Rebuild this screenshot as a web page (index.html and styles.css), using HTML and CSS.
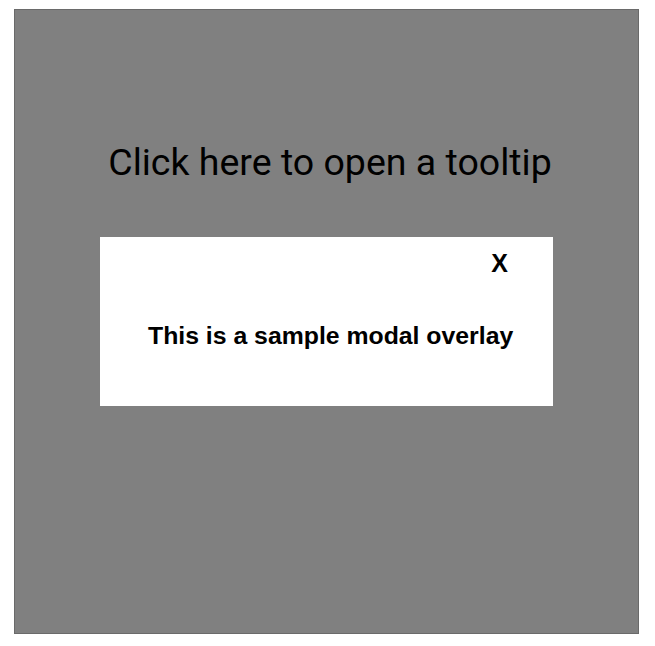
FILE: index.html
```html
<!DOCTYPE html>
<html>
<head>
<meta charset="utf-8">
<link rel="stylesheet" href="styles.css">
</head>
<body>
<div class="stage">
  <h1 class="trigger">Click here to open a tooltip</h1>
  <div class="modal">
    <div class="close-row"><span class="close">X</span></div>
    <p class="modal-text">This is a sample modal overlay</p>
  </div>
</div>
</body>
</html>
```
FILE: styles.css
```css
html, body { margin: 0; background: #fff; }
body { padding: 9px 0 0 14px; }
.stage {
  box-sizing: border-box;
  width: 625px;
  height: 625px;
  background: #808080;
  border: 1px solid #6a6a6a;
  display: flex;
  flex-direction: column;
  align-items: center;
  padding-top: 130px;
}
.trigger {
  margin: 0;
  padding-left: 7px;
  font-family: Roboto, sans-serif;
  font-weight: 400;
  font-size: 37.5px;
  line-height: 44px;
  color: #000;
}
.modal {
  margin-top: 53px;
  width: 453px;
  height: 169px;
  background: #fff;
  box-sizing: border-box;
  padding: 12px 45px 0 45px;
  font-family: "Liberation Sans", Arial, sans-serif;
  font-weight: bold;
  color: #000;
}
.close-row { display: flex; justify-content: flex-end; }
.close { font-size: 25px; line-height: 28px; }
.modal-text {
  margin: 45px 0 0;
  padding-left: 3px;
  white-space: nowrap;
  font-size: 24.8px;
  line-height: 28px;
}
```
